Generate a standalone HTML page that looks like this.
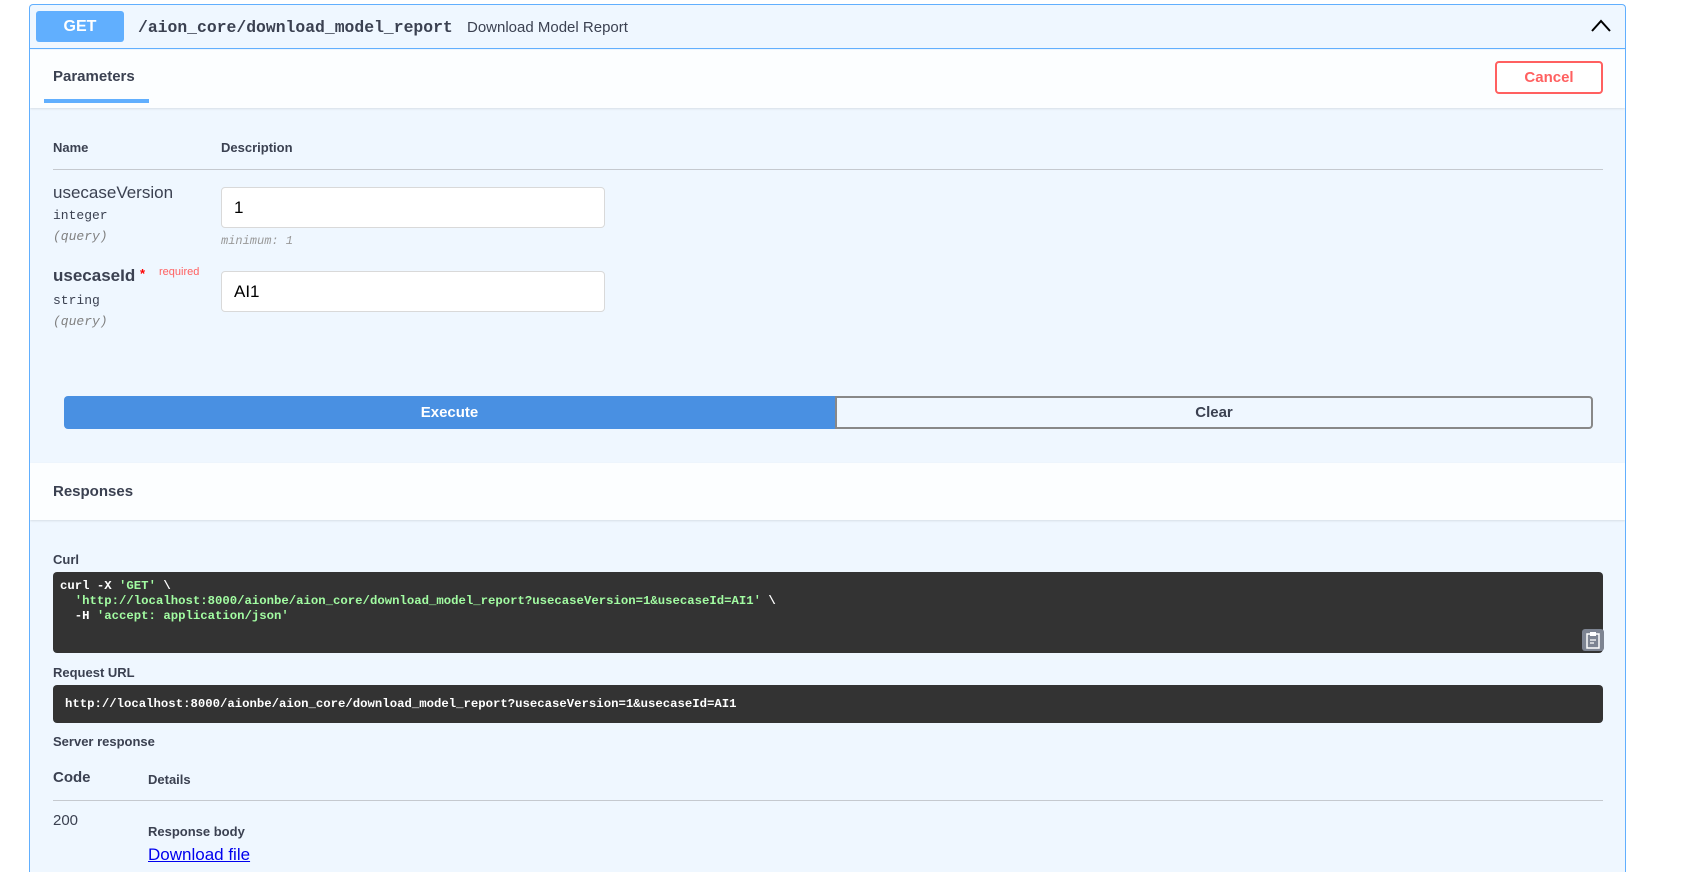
<!DOCTYPE html>
<html style="width:1688px;height:872px;overflow:hidden"><head><meta charset="utf-8"><style>
*{box-sizing:border-box;margin:0;padding:0}
body{width:1688px;height:872px;overflow:hidden;background:#fff;font-family:"Liberation Sans",sans-serif;color:#3b4151;position:relative}
.panel{position:absolute;left:29px;top:4px;height:868px;background:#eff7ff;border:1px solid #61affe;border-bottom:none;border-radius:4px 4px 0 0;width:1597px;overflow:hidden}
.a{position:absolute}
.hdr{left:0;top:0;width:100%;height:44px;border-bottom:1px solid #61affe}
.get{left:6px;top:6px;width:88px;height:31px;background:#61affe;color:#fff;font-weight:bold;font-size:16px;text-align:center;line-height:31px;border-radius:3px}
.mono{font-family:"Liberation Mono",monospace}
.sec{background:rgba(255,255,255,.8);left:0;width:100%;box-shadow:0 1px 2px rgba(0,0,0,.1)}
.b{font-weight:bold}
.inp{background:#fff;border:1px solid #d9d9d9;border-radius:4px;width:384px;height:41px;font-size:17px;padding:10px 12px;color:#000}
.code{background:#333;border-radius:4px;left:23px;width:1550px;color:#fff;font-family:"Liberation Mono",monospace;font-size:12.3px;font-weight:bold}
.g{color:#a2fca2}
</style></head><body>
<div class="panel">
 <div class="a hdr"></div>
 <div class="a get">GET</div>
 <div class="a mono" style="left:108px;top:13px;font-size:16.4px;font-weight:bold;color:#3b4151">/aion_core/download_model_report</div>
 <div class="a" style="left:437px;top:14px;font-size:15px">Download Model Report</div>
 <svg class="a" style="left:1560px;top:13px" width="22" height="16" viewBox="0 0 22 16"><path d="M2 13 L11 3 L20 13" fill="none" stroke="#000" stroke-width="2"/></svg>
 <div class="a sec" style="top:45px;height:58px"></div>
 <div class="a b" style="left:23px;top:63px;font-size:15px">Parameters</div>
 <div class="a" style="left:14px;top:94px;width:105px;height:4px;background:#61affe"></div>
 <div class="a" style="left:1465px;top:56px;width:108px;height:33px;border:2px solid #ff6060;border-radius:4px;color:#ff6060;font-weight:bold;font-size:15px;text-align:center;line-height:29px;background:#fff">Cancel</div>
 <div class="a b" style="left:23px;top:135px;font-size:13px">Name</div>
 <div class="a b" style="left:191px;top:135px;font-size:13px">Description</div>
 <div class="a" style="left:23px;top:164px;width:1550px;height:1px;background:#c5c9cf"></div>
 <div class="a" style="left:23px;top:178px;font-size:17px">usecaseVersion</div>
 <div class="a mono" style="left:23px;top:203px;font-size:13px">integer</div>
 <div class="a mono" style="left:23px;top:224px;font-size:13px;font-style:italic;color:#808080">(query)</div>
 <div class="a inp" style="left:191px;top:182px">1</div>
 <div class="a mono" style="left:191px;top:229px;font-size:12px;font-style:italic;color:#999">minimum: 1</div>
 <div class="a b" style="left:23px;top:261px;font-size:17px">usecaseId <span style="color:red;font-size:13px;vertical-align:top">*</span></div>
 <div class="a" style="left:129px;top:261px;font-size:11px;color:#ff6060">required</div>
 <div class="a mono" style="left:23px;top:288px;font-size:13px">string</div>
 <div class="a mono" style="left:23px;top:309px;font-size:13px;font-style:italic;color:#808080">(query)</div>
 <div class="a inp" style="left:191px;top:266px">AI1</div>
 <div class="a b" style="left:34px;top:391px;width:771px;height:33px;background:#4990e2;color:#fff;font-size:15px;text-align:center;line-height:33px;border-radius:4px 0 0 4px">Execute</div>
 <div class="a b" style="left:805px;top:391px;width:758px;height:33px;border:2px solid #888;font-size:15px;text-align:center;line-height:29px;border-radius:0 4px 4px 0">Clear</div>
 <div class="a sec" style="top:458px;height:57px"></div>
 <div class="a b" style="left:23px;top:478px;font-size:15px">Responses</div>
 <div class="a b" style="left:23px;top:547px;font-size:13px">Curl</div>
 <div class="a code" style="top:567px;height:81px;padding:7px 7px;line-height:15px;white-space:pre">curl -X <span class="g">'GET'</span> \
  <span class="g">'http://localhost:8000/aionbe/aion_core/download_model_report?usecaseVersion=1&amp;usecaseId=AI1'</span> \
  -H <span class="g">'accept: application/json'</span></div>
 <svg class="a" style="left:1552px;top:624px" width="22" height="22" viewBox="0 0 22 22"><rect x="0" y="0" width="22" height="22" rx="3" fill="#7d8492"/><rect x="5" y="5" width="12" height="14" fill="none" stroke="#fff" stroke-width="1.5"/><rect x="8" y="3" width="6" height="4" fill="#fff"/><path d="M8 11h6M8 14h4" stroke="#fff" stroke-width="1.3"/></svg>
 <div class="a b" style="left:23px;top:660px;font-size:13px">Request URL</div>
 <div class="a code" style="top:680px;height:38px;padding:0 12px;line-height:38px">http://localhost:8000/aionbe/aion_core/download_model_report?usecaseVersion=1&amp;usecaseId=AI1</div>
 <div class="a b" style="left:23px;top:729px;font-size:13px">Server response</div>
 <div class="a b" style="left:23px;top:764px;font-size:15px">Code</div>
 <div class="a b" style="left:118px;top:767px;font-size:13px">Details</div>
 <div class="a" style="left:23px;top:795px;width:1550px;height:1px;background:#c5c9cf"></div>
 <div class="a" style="left:23px;top:807px;font-size:15px">200</div>
 <div class="a b" style="left:118px;top:819px;font-size:13px">Response body</div>
 <div class="a" style="left:118px;top:840px;font-size:17px;color:#00e;text-decoration:underline">Download file</div>
</div>
</body></html>
